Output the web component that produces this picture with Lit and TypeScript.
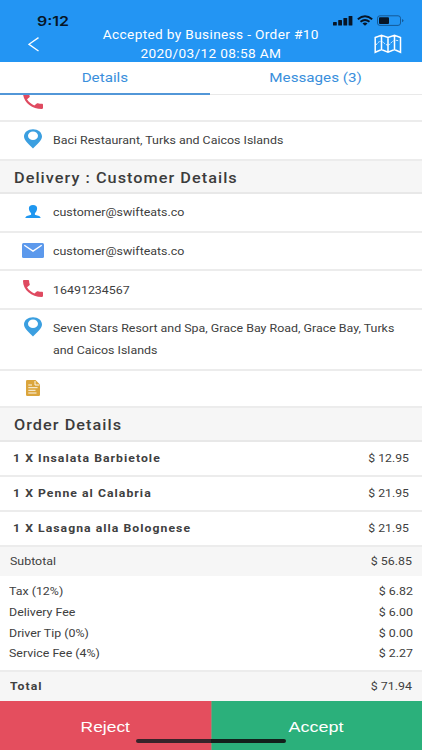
import { LitElement, html, css } from "lit";
import { customElement } from "lit/decorators.js";

const phone = html`<svg class="ic" width="20" height="17" viewBox="3 3 18 18" preserveAspectRatio="none"><path fill="#df4a60" d="M6.62 10.79c1.44 2.83 3.76 5.14 6.59 6.59l2.2-2.2c.27-.27.67-.36 1.02-.24 1.12.37 2.33.57 3.57.57.55 0 1 .45 1 1V20c0 .55-.45 1-1 1-9.39 0-17-7.61-17-17 0-.55.45-1 1-1h3.5c.55 0 1 .45 1 1 0 1.25.2 2.45.57 3.57.11.35.03.74-.25 1.02l-2.2 2.2z"/></svg>`;
const pin = html`<svg class="ic" width="18" height="20" viewBox="0 0 18 20"><path fill="#3b9fe0" fill-rule="evenodd" d="M9 0.2C4 .2 0 3.2 0 7.6C0 12 5.2 15.200 9 19.600C12.800 15.200 18 12 18 7.600C18 3.200 14 .2 9 .2ZM9 2.400A5 4.300 0 1 1 9 11A5 4.300 0 1 1 9 2.400Z"/></svg>`;
const person = html`<svg class="ic" width="16" height="13" viewBox="0 0 16 13"><path fill="#1f97f0" d="M8 0C5.200 0 3.800 1.300 3.900 3.600C4 5.800 5 7.400 6.100 8.200V9.700C4.500 10.500 .8 10.500 .3 13H15.700C15.200 10.500 11.500 10.500 9.900 9.700V8.200C11 7.400 12 5.800 12.100 3.600C12.200 1.300 10.800 0 8 0Z"/></svg>`;
const mail = html`<svg class="ic" width="22" height="15" viewBox="0 0 22 15"><rect width="22" height="15" rx="1.500" fill="#5c99ec"/><path d="M2.300 2.300L11 8.100L19.700 2.300" fill="none" stroke="#fff" stroke-width="1.300"/></svg>`;
const note = html`<svg class="ic" width="14" height="16" viewBox="0 0 14 16"><path fill="#dba53c" d="M1.200 0H9.500L14 4.500V14.800Q14 16 12.800 16H1.200Q0 16 0 14.800V1.200Q0 0 1.200 0Z"/><path d="M9 1V5H13.300M2.300 5H6M2.300 7.700H11.600M2.300 10.300H9.500M2.300 13H10.500" fill="none" stroke="#fff" stroke-width=".9"/></svg>`;

@customElement("app-root")
export class AppRoot extends LitElement {
  static styles = css`
    :host { display: block; width: 422px; height: 750px; overflow: hidden; background: #fff; font-family: Roboto, sans-serif; color: #404040; }
    * { box-sizing: border-box; }
    .screen { position: relative; height: 750px; display: flex; flex-direction: column; }
    .t { display: inline-block; white-space: nowrap; transform: scaleX(var(--sx, 1.18)); transform-origin: left center; }
    .c { transform-origin: center; }
    .r { transform-origin: right center; }
    header { height: 62px; background: #2395f3; display: flex; flex-direction: column; flex: none; --sx: 1.139; }
    .status { height: 26px; padding: 13px 18px 0 37px; display: flex; justify-content: space-between; align-items: flex-start; color: #071526; --sx: 1.2; }
    .time { font: 600 13.300px/17px Inter, sans-serif; }
    .signals { display: flex; gap: 4px; padding-top: 2px; }
    .nav { height: 36px; display: grid; grid-template-columns: 66px 1fr 66px; }
    .back { margin: 11px 0 0 28px; }
    .map { margin: 8px 0 0 18px; }
    .title { text-align: center; color: #fff; font-size: 12px; line-height: 18.500px; letter-spacing: .3px; }
    .tabs { height: 33px; display: grid; grid-template: 33px / 210px 212px; text-align: center; color: #3a8fdc; font-size: 13px; line-height: 32px; flex: none; --sx: 1.168; }
    .tabs div { border-bottom: 1px solid #e9e9e9; }
    .tabs .on { border-bottom: 2px solid #5297d8; line-height: 31px; }
    .row { border-bottom: 2px solid #ececec; display: flex; align-items: flex-start; font-size: 10.500px; line-height: 22px; flex: none; --sx: 1.182; }
    .slot { width: 53px; padding-left: 13px; display: flex; justify-content: center; flex: none; }
    .ic { display: block; flex: none; }
    .cut { height: 27px; overflow: hidden; }
    .cut .ic { margin-top: -3px; }
    h2 { margin: 0; background: #f6f6f6; border-bottom: 2px solid #e8e8e8; padding-left: 13.500px; font-size: 14px; font-weight: 500; letter-spacing: .9px; color: #3c3c3c; flex: none; --sx: 1.16; }
    .item { padding: 0 13px; display: flex; justify-content: space-between; border-bottom: 2px solid #ececec; font-size: 10.500px; line-height: 33px; flex: none; --sx: 1.163; }
    .name { font-weight: 700; letter-spacing: .9px; --sx: 1.163; }
    .sum { background: #f6f6f6; padding: 0 10px; display: flex; justify-content: space-between; font-size: 10.500px; flex: none; }
    .fees { height: 96px; padding: 6px 9px 0; font-size: 10.500px; line-height: 20.800px; border-bottom: 2px solid #ececec; flex: none; }
    .fee { display: flex; justify-content: space-between; }
    .actions { flex: 1; display: grid; grid-template-columns: 1fr 1fr; color: #fff; text-align: center; font: 15px/51px "Liberation Sans", sans-serif; }
    .reject { background: #e44e5e; --sx: 1.16; }
    .accept { background: #2bb07b; border-left: 1px solid #7f9278; padding-right: 2px; --sx: 1.2; }
    .home { position: absolute; left: 136px; bottom: 7px; width: 150px; height: 4px; border-radius: 2px; background: linear-gradient(90deg, #37242a 50%, #12201b 50%); }
  `;

  row(icon: unknown, lines: string[], height: number, iconTop: number, textTop: number) {
    return html`<div class="row" style="height:${height}px">
      <div class="slot" style="padding-top:${iconTop}px">${icon}</div>
      <div style="padding-top:${textTop}px">${lines.map((l) => html`<div><span class="t">${l}</span></div>`)}</div>
    </div>`;
  }

  item(name: string, price: string, height: number) {
    return html`<div class="item" style="height:${height}px"><span class="t name">${name}</span><span class="t r">${price}</span></div>`;
  }

  render() {
    return html`<div class="screen">
      <header>
        <div class="status">
          <span class="t time">9:12</span>
          <div class="signals">
            <svg width="20" height="11" viewBox="0 0 20 11" fill="#071526"><rect x="0" y="7" width="3.800" height="3.500" rx=".6"/><rect x="5.200" y="5" width="3.800" height="5.500" rx=".6"/><rect x="10.400" y="3" width="3.800" height="7.500" rx=".6"/><rect x="15.600" y="1" width="3.800" height="9.500" rx=".6"/></svg>
            <svg width="16" height="11" viewBox="0 0 16 11" fill="none" stroke="#071526" stroke-width="1.800"><path d="M.8 4.300Q8-1.700 15.200 4.300M3.500 6.800Q8 3.200 12.500 6.800"/><path d="M5.500 8.400Q8 6.600 10.500 8.400L8 10.700Z" fill="#071526" stroke="none"/></svg>
            <svg width="27" height="11" viewBox="0 0 27 11"><rect x=".5" y=".8" width="23" height="9.600" rx="2.400" fill="none" stroke="#155a98"/><rect x="2" y="2.200" width="10" height="6.800" rx="1" fill="#071526"/><path d="M25 4v3.200q1.500-.5 1.500-1.600t-1.500-1.600z" fill="#155a98"/></svg>
          </div>
        </div>
        <div class="nav">
          <svg class="back" width="11" height="15" viewBox="0 0 11 15"><path d="M10.500 .6L1 7.300L10.500 14" fill="none" stroke="#fff" stroke-width="1.300"/></svg>
          <div class="title"><div><span class="t c">Accepted by Business - Order #10</span></div><div><span class="t c">2020/03/12 08:58 AM</span></div></div>
          <svg class="map" width="28" height="20" viewBox="0 0 28 20" fill="none" stroke="#fff"><path stroke-width="1.500" d="M1.200 3.500L7.500 1.200L14 3.500L20.500 1.200L26.500 3.500V18.300L20.500 15.500L14 18.300L7.500 15.500L1.200 18.300ZM7.500 1.200V15.500M14 3.500V18.300M20.500 1.200V15.500"/><path stroke-width=".9" stroke-dasharray="2 1" d="M2 11Q6 5 10 9T17 9T25 7"/></svg>
        </div>
      </header>
      <div class="tabs"><div class="on"><span class="t c">Details</span></div><div><span class="t c">Messages (3)</span></div></div>
      <div class="row cut"><div class="slot">${phone}</div></div>
      ${this.row(pin, ["Baci Restaurant, Turks and Caicos Islands"], 39, 7, 8)}
      <h2 style="height:33px;line-height:34px"><span class="t">Delivery : Customer Details</span></h2>
      ${this.row(person, ["customer@swifteats.co"], 39, 11, 8)}
      ${this.row(mail, ["customer@swifteats.co"], 38, 10, 8)}
      ${this.row(phone, ["16491234567"], 39, 9, 9)}
      ${this.row(pin, ["Seven Stars Resort and Spa, Grace Bay Road, Grace Bay, Turks", "and Caicos Islands"], 61, 7, 8)}
      ${this.row(note, [], 37, 9, 0)}
      <h2 style="height:34px;line-height:35px"><span class="t">Order Details</span></h2>
      ${this.item("1 X Insalata Barbietole", "$ 12.95", 35)}
      ${this.item("1 X Penne al Calabria", "$ 21.95", 35)}
      ${this.item("1 X Lasagna alla Bolognese", "$ 21.95", 35)}
      <div class="sum" style="height:29px;line-height:30px"><span class="t">Subtotal</span><span class="t r">$ 56.85</span></div>
      <div class="fees">
        ${[["Tax (12%)", "$ 6.82"], ["Delivery Fee", "$ 6.00"], ["Driver Tip (0%)", "$ 0.00"], ["Service Fee (4%)", "$ 2.27"]].map(([n, v]) => html`<div class="fee"><span class="t">${n}</span><span class="t r">${v}</span></div>`)}
      </div>
      <div class="sum" style="height:29px;line-height:30px"><span class="t name">Total</span><span class="t r">$ 71.94</span></div>
      <div class="actions"><div class="reject"><span class="t c">Reject</span></div><div class="accept"><span class="t c">Accept</span></div></div>
      <div class="home"></div>
    </div>`;
  }
}
